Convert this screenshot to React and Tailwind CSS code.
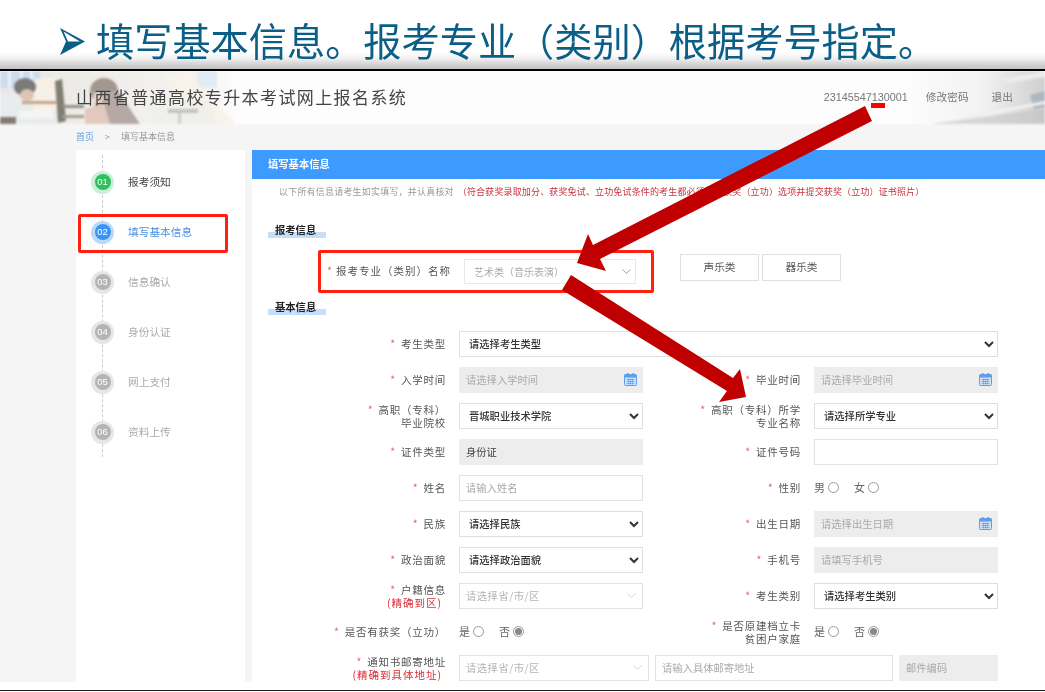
import React from 'react'
import { ChevronDown } from 'lucide-react'

const cjk = { fontFamily: '"Noto Sans CJK SC", "Liberation Sans", sans-serif' }

const steps = [
  { no: '01', name: '报考须知', kind: 'done' },
  { no: '02', name: '填写基本信息', kind: 'now' },
  { no: '03', name: '信息确认', kind: 'todo' },
  { no: '04', name: '身份认证', kind: 'todo' },
  { no: '05', name: '网上支付', kind: 'todo' },
  { no: '06', name: '资料上传', kind: 'todo' },
]

const ringClass = {
  done: 'bg-[#c9efd6]',
  now: 'bg-[#b9d9fb]',
  todo: 'bg-[#e6e6e6]',
}
const dotClass = {
  done: 'bg-[#2fbf5f]',
  now: 'bg-[#3c93f6]',
  todo: 'bg-[#b4b4b4]',
}
const nameClass = {
  done: 'text-[#444]',
  now: 'text-[#4a90e2]',
  todo: 'text-[#aaa]',
}

function HeaderPhoto() {
  return (
    <svg className="absolute inset-0 opacity-80 blur-[1px]" width="1045" height="53" viewBox="0 0 1045 53">
      <defs>
        <linearGradient id="fadeL" x1="0" x2="1" y1="0" y2="0">
          <stop offset="0" stopColor="#e3e1dc" />
          <stop offset="0.8" stopColor="#f3f1ee" />
          <stop offset="1" stopColor="#fdfdfd" />
        </linearGradient>
        <linearGradient id="fadeR" x1="0" x2="1" y1="0" y2="0">
          <stop offset="0" stopColor="#fdfdfd" />
          <stop offset="0.55" stopColor="#f0f0f0" />
          <stop offset="1" stopColor="#c4c4c6" />
        </linearGradient>
      </defs>
      <rect x="0" y="0" width="240" height="53" fill="url(#fadeL)" />
      <rect x="905" y="0" width="140" height="53" fill="url(#fadeR)" />

      <rect x="0" y="0" width="40" height="17" fill="#c0d4ea" />
      <rect x="8" y="0" width="3" height="17" fill="#e6eef6" />
      <rect x="20" y="0" width="3" height="17" fill="#e6eef6" />
      <rect x="30" y="0" width="3" height="17" fill="#e6eef6" />
      <rect x="197" y="0" width="20" height="17" fill="#dce7f2" />

      <polygon points="34,8 60,6 62,40 34,40" fill="#f6eee2" />
      <rect x="0" y="22" width="34" height="31" fill="#e4e8ea" />
      <ellipse cx="25" cy="16" rx="11" ry="9" fill="#5a5a58" />
      <ellipse cx="27" cy="24" rx="7" ry="6" fill="#d8b7a0" />
      <rect x="0" y="46" width="16" height="7" fill="#6a5a50" />
      <rect x="22" y="30" width="34" height="3" fill="#b98f6e" />
      <polygon points="18,40 52,38 54,47 20,48" fill="#f2f4f2" />
      <polygon points="55,10 62,8 66,50 58,52" fill="#615f50" />
      <rect x="62" y="34" width="22" height="3" fill="#77756a" />
      <rect x="62" y="44" width="22" height="3" fill="#8a887c" />

      <ellipse cx="104" cy="20" rx="14" ry="13" fill="#8e7e78" />
      <polygon points="92,20 118,20 140,53 98,53" fill="#a29590" />
      <polygon points="85,38 104,32 110,53 85,53" fill="#dcbcae" />
      <ellipse cx="98" cy="27" rx="5" ry="6" fill="#e5c8b6" />

      <polygon points="165,6 190,4 235,53 200,53" fill="#f7f1e6" />
      <polygon points="150,30 210,30 216,53 155,53" fill="#eeece6" />
      <rect x="168" y="38" width="30" height="4" fill="#b4b6b8" />
      <rect x="178" y="42" width="3" height="11" fill="#c4c4c4" />

      <polygon points="1000,8 1045,0 1045,6 1010,12" fill="#e8e8e8" />
      <polygon points="1030,24 1045,20 1045,36 1034,38" fill="#9ba6b2" />
      <polygon points="960,46 1045,30 1045,33 968,48" fill="#eeeeee" />
      <polygon points="930,53 1045,38 1045,53" fill="#b5b5b7" opacity="0.6" />
    </svg>
  )
}

function CalendarIcon() {
  return (
    <svg width="13" height="13" viewBox="0 0 13 13" className="shrink-0">
      <rect x="0.5" y="1.5" width="12" height="11" rx="1" fill="#cfe2f8" stroke="#5b9fe8" />
      <rect x="0.5" y="1.5" width="12" height="3" fill="#5b9fe8" />
      <rect x="3" y="0" width="1.5" height="3" fill="#5b9fe8" />
      <rect x="8.5" y="0" width="1.5" height="3" fill="#5b9fe8" />
      <path d="M2.5 6.5h8M2.5 8.5h8M2.5 10.5h8M4.5 5.5v6M6.5 5.5v6M8.5 5.5v6" stroke="#5b9fe8" strokeWidth="0.7" />
    </svg>
  )
}

function Label({ lines, note, className = '' }) {
  return (
    <div className={`flex flex-col items-end justify-center pr-[13px] text-[10.5px] leading-[13px] tracking-[0.75px] text-[#555] ${className}`}>
      {lines.map((line, i) => (
        <div key={line}>
          {i === 0 && <span className="mr-[5px] text-[#e06a6a]">*</span>}
          {line}
        </div>
      ))}
      {note && <div className="mr-[4px] tracking-[1px] text-[#d9303a]">{note}</div>}
    </div>
  )
}

function Picker({ children, className = '' }) {
  return (
    <select
      style={cjk}
      defaultValue={children}
      className={`h-[26px] rounded-none border border-[#dedede] bg-white pl-[5px] text-[10.3px] font-medium text-[#333] ${className}`}
    >
      <option>{children}</option>
    </select>
  )
}

function TextBox({ hint, gray, className = '' }) {
  return (
    <input
      placeholder={hint}
      style={cjk}
      className={`h-[26px] border px-[6px] text-[10.3px] outline-none placeholder:text-[#aaa] ${gray ? 'border-[#ededed] bg-[#ededed]' : 'border-[#e2e2e2] bg-white'} ${className}`}
    />
  )
}

function DateBox({ hint }) {
  return (
    <div className="flex h-[26px] items-center justify-between bg-[#ededed] pl-[7px] pr-[6px] text-[10.3px] text-[#aaa]">
      {hint}
      <CalendarIcon />
    </div>
  )
}

function Area({ className = '' }) {
  return (
    <div className={`flex h-[26px] items-center justify-between border border-[#e2e2e2] bg-white pl-[6px] pr-[3px] text-[10.3px] tracking-[0.5px] text-[#b4b4b4] ${className}`}>
      请选择省/市/区
      <ChevronDown size={15} strokeWidth={1} color="#b8b8b8" />
    </div>
  )
}

function Radio({ label, on }) {
  return (
    <span className="flex items-center gap-[3px]">
      {label}
      <span className="flex size-[11px] items-center justify-center rounded-full border border-[#999] bg-white">
        {on && <span className="size-[7px] rounded-full bg-[#888]" />}
      </span>
    </span>
  )
}

function RadioRow({ a, b, second }) {
  return (
    <div className="flex items-center gap-[15px] text-[11px] text-[#666]">
      <Radio label={a} />
      <Radio label={b} on={second} />
    </div>
  )
}

function Section({ children, className = '' }) {
  return (
    <div className={`ml-[16px] w-[58px] bg-[linear-gradient(transparent_8px,#c5dffa_8px)] h-[14px] pl-[7px] text-[10.3px] font-bold leading-[12px] text-[#222] ${className}`}>
      {children}
    </div>
  )
}

function Arrows() {
  return (
    <svg className="pointer-events-none absolute inset-0" width="1045" height="692" viewBox="0 0 1045 692">
      <rect x="871" y="103" width="14" height="5" fill="#ff0000" />
      <polygon points="865,106 872,121 600,259 606,271 577,263 588,234 593,245" fill="#c00000" />
      <polygon points="571,275 562,290 727,391 719,402 746,397 740,369 733,378" fill="#c00000" />
    </svg>
  )
}

export default function App() {
  return (
    <div style={cjk} className="relative flex h-[692px] w-[1045px] flex-col overflow-hidden bg-white">
      <div className="relative h-[69px] shrink-0 bg-[linear-gradient(#ffffff_52px,#f2f2f2_58px,#cccccc_66px,#c4c4c4_69px)]">
        <div className="flex h-[67px] items-end pl-[60px] pb-[2px] blur-[0.3px]">
          <svg width="25" height="27" viewBox="0 0 25 27" className="mb-[10px] mr-[11px] shrink-0">
            <path d="M0 0 L25 13.5 L0 27 L6 13.5 Z M3.5 3.5 L8 13.5 L20 13.5 Z" fill="#0b5f86" fillRule="evenodd" />
          </svg>
          <div className="whitespace-nowrap text-[38.2px] leading-[50px] text-[#0b5f86]">
            填写基本信息。报考专业（类别）根据考号指定。
          </div>
        </div>
      </div>
      <div className="h-[1.5px] shrink-0 bg-black" />

      <div className="flex h-[611px] shrink-0 flex-col overflow-hidden bg-[#f5f5f5] blur-[0.35px]">
        <div className="relative flex h-[53px] shrink-0 items-center justify-between bg-[#fdfdfd] pl-[76px] pr-[32px]">
          <HeaderPhoto />
          <div className="relative text-[17px] tracking-[1.4px] text-[#444]">山西省普通高校专升本考试网上报名系统</div>
          <div className="relative flex items-center text-[10.7px] text-[#777]">
            <span style={{ fontFamily: '"Liberation Sans", sans-serif' }} className="text-[10.8px]">23145547130001</span>
            <span className="ml-[18px]">修改密码</span>
            <span className="ml-[23px]">退出</span>
          </div>
        </div>

        <div className="flex h-[26px] shrink-0 items-center pl-[76px] text-[9px] text-[#999]">
          <span className="text-[#5a9be0]">首页</span>
          <span className="ml-[11px]">&gt;</span>
          <span className="ml-[11px]">填写基本信息</span>
        </div>

        <div className="flex flex-1 gap-[7px] overflow-hidden pl-[76px]">
          <div className="relative w-[169px] shrink-0 bg-white pt-[21px]">
            <div className="absolute left-[26px] top-[5px] h-[302px] border-l border-dashed border-[#ccc]" />
            {steps.map((s) => (
              <div key={s.no} className="relative flex h-[50px] items-start">
                <div className={`ml-[15px] flex size-[23px] items-center justify-center rounded-full ${ringClass[s.kind]}`}>
                  <div
                    style={{ fontFamily: '"Liberation Sans", sans-serif' }}
                    className={`flex size-[16px] items-center justify-center rounded-full text-[9.5px] text-white ${dotClass[s.kind]}`}
                  >
                    {s.no}
                  </div>
                </div>
                <div className={`ml-[14px] text-[10.7px] leading-[22px] ${nameClass[s.kind]}`}>{s.name}</div>
                {s.kind === 'now' && (
                  <div className="absolute -top-[7px] left-[2px] h-[39px] w-[150px] rounded-[2px] border-[3px] border-[#ff2010]" />
                )}
              </div>
            ))}
          </div>

          <div className="flex-1 overflow-hidden bg-white">
            <div className="flex h-[29px] items-center bg-[#3d9aff] pl-[16px] text-[10.3px] font-bold text-white">填写基本信息</div>
            <div className="flex h-[26px] items-center pl-[27px] text-[9px] whitespace-nowrap">
              <span className="tracking-[0.2px] text-[#999]">以下所有信息请考生如实填写，并认真核对</span>
              <span className="ml-[4px] tracking-[0.15px] text-[#c8323c]">（符合获奖录取加分、获奖免试、立功免试条件的考生都必须勾选获奖（立功）选项并提交获奖（立功）证书照片）</span>
            </div>

            <Section className="mt-[19px]">报考信息</Section>

            <div className="mt-[12px] ml-[66px] flex h-[43px] w-[336px] items-center rounded-[2px] border-[3px] border-[#ff2010] pl-[6px]">
              <div className="text-[10.5px] tracking-[1px] text-[#555]">
                <span className="mr-[3px] text-[#e06a6a]">*</span>报考专业（类别）名称
              </div>
              <div className="ml-[13px] flex h-[25px] w-[172px] shrink-0 items-center justify-between border border-[#e8e8e8] bg-white pl-[9px] pr-[1px] text-[10px] text-[#aaa]">
                艺术类（音乐表演）
                <ChevronDown size={15} strokeWidth={1.5} color="#999" />
              </div>
            </div>
            <div className="-mt-[39px] mb-[12px] ml-[428px] flex h-[27px] gap-[3px] text-[10.7px] text-[#555]">
              <div className="flex w-[79px] items-center justify-center border border-[#e0e0e0]">声乐类</div>
              <div className="flex w-[79px] items-center justify-center border border-[#e0e0e0]">器乐类</div>
            </div>

            <Section className="mt-[20px]">基本信息</Section>

            <div className="mt-[16px] grid grid-cols-[207px_184px_171px_184px] auto-rows-[26px] gap-y-[10px]">
              <Label lines={['考生类型']} />
              <Picker className="col-span-3 w-full">请选择考生类型</Picker>

              <Label lines={['入学时间']} />
              <DateBox hint="请选择入学时间" />
              <Label lines={['毕业时间']} />
              <DateBox hint="请选择毕业时间" />

              <Label lines={['高职（专科）', '毕业院校']} />
              <Picker className="w-full">晋城职业技术学院</Picker>
              <Label lines={['高职（专科）所学', '专业名称']} />
              <Picker className="w-full">请选择所学专业</Picker>

              <Label lines={['证件类型']} />
              <div className="flex items-center bg-[#ededed] pl-[7px] text-[10.3px] text-[#444]">身份证</div>
              <Label lines={['证件号码']} />
              <TextBox />

              <Label lines={['姓名']} />
              <TextBox hint="请输入姓名" />
              <Label lines={['性别']} />
              <RadioRow a="男" b="女" />

              <Label lines={['民族']} />
              <Picker className="w-full">请选择民族</Picker>
              <Label lines={['出生日期']} />
              <DateBox hint="请选择出生日期" />

              <Label lines={['政治面貌']} />
              <Picker className="w-full">请选择政治面貌</Picker>
              <Label lines={['手机号']} />
              <TextBox gray hint="请填写手机号" />

              <Label lines={['户籍信息']} note="(精确到区)" />
              <Area />
              <Label lines={['考生类别']} />
              <Picker className="w-full">请选择考生类别</Picker>

              <Label lines={['是否有获奖（立功）']} />
              <RadioRow a="是" b="否" second />
              <Label lines={['是否原建档立卡', '贫困户家庭']} />
              <RadioRow a="是" b="否" second />

              <Label lines={['通知书邮寄地址']} note="(精确到具体地址)" />
              <div className="col-span-3 flex gap-[6px]">
                <Area className="w-[190px] shrink-0" />
                <TextBox hint="请输入具体邮寄地址" className="w-[238px] shrink-0" />
                <TextBox gray hint="邮件编码" className="w-[99px] shrink-0" />
              </div>
            </div>
          </div>
        </div>
      </div>

      <div className="flex-1" />
      <div className="mb-[1px] h-[1.5px] shrink-0 bg-[#222]" />
      <Arrows />
    </div>
  )
}
